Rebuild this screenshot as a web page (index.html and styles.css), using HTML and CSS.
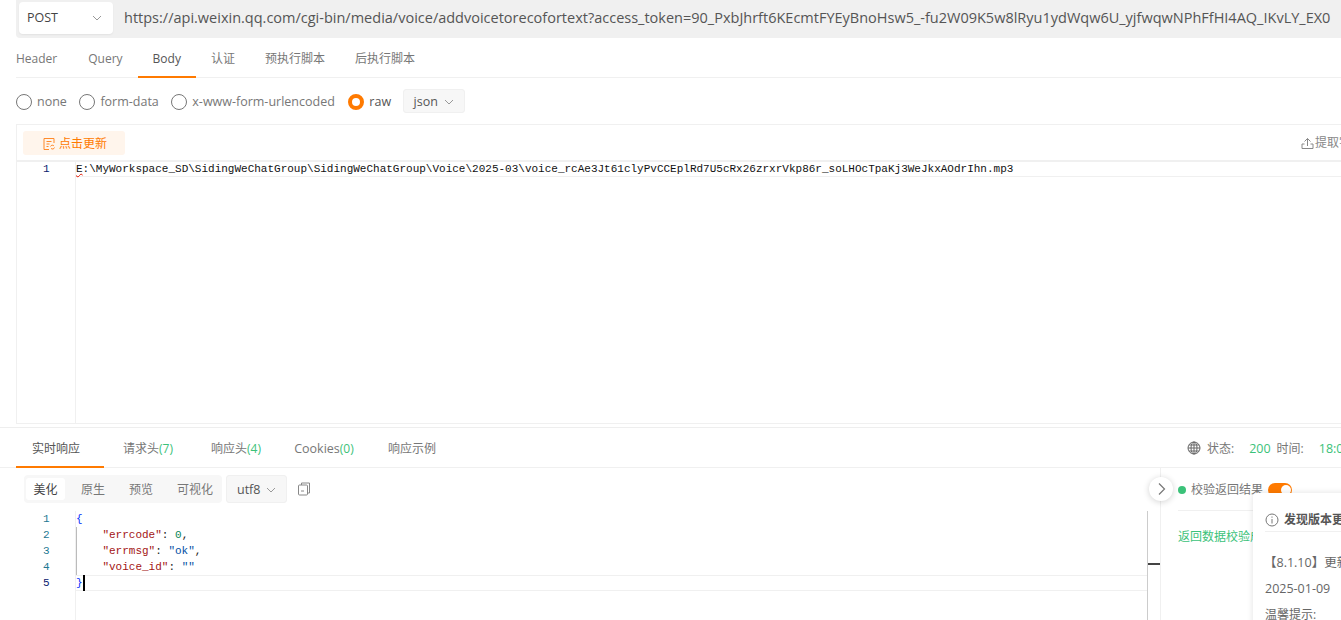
FILE: index.html
```html
<!DOCTYPE html>
<html lang="zh-CN">
<head>
<meta charset="utf-8">
<title>API</title>
<link rel="stylesheet" href="styles.css">
</head>
<body>
<div class="page">
  <section class="request">
    <div class="urlbar">
      <div class="method"><span>POST</span><svg class="chev" width="12" height="12" viewBox="0 0 12 12"><path d="M2 4l4 4 4-4" fill="none" stroke="#999" stroke-width="1"/></svg></div>
      <div class="url">https://api.weixin.qq.com/cgi-bin/media/voice/addvoicetorecofortext?access_token=90_PxbJhrft6KEcmtFYEyBnoHsw5_-fu2W09K5w8lRyu1ydWqw6U_yjfwqwNPhFfHI4AQ_IKvLY_EX0</div>
    </div>
    <nav class="tabs">
      <a class="tab">Header</a><a class="tab">Query</a><a class="tab active">Body</a><a class="tab">认证</a><a class="tab">预执行脚本</a><a class="tab">后执行脚本</a>
    </nav>
    <div class="radios">
      <label class="radio"><i class="dot"></i>none</label>
      <label class="radio"><i class="dot"></i>form-data</label>
      <label class="radio wide"><i class="dot"></i>x-www-form-urlencoded</label>
      <label class="radio on"><i class="dot"></i>raw</label>
      <div class="select json">json<svg width="12" height="12" viewBox="0 0 12 12"><path d="M2 4l4 4 4-4" fill="none" stroke="#999"/></svg></div>
    </div>
    <div class="editor">
      <div class="edit-tools">
        <button class="update"><svg width="14" height="14" viewBox="0 0 14 14" fill="none" stroke="#ff8a2b"><path d="M12 6V1.500H2v11h5M4.500 4.500h5M4.500 7h3M4.500 9.500h2M8.500 9.500a2 2 0 0 1 3.500-.5M12.500 10.500a2 2 0 0 1-3.500.8"/></svg>点击更新</button>
        <div class="extract"><svg width="13" height="13" viewBox="0 0 13 13" fill="none" stroke="#888"><path d="M3.500 7H1v4.500h11V7H9.500M6.500 9V1.500M3.500 4.500l3-3 3 3"/></svg>提取字段</div>
      </div>
      <div class="code body-code">
        <div class="gutter"><div class="num last">1</div></div>
        <div class="lines"><div class="line cur"><span class="squiggle">E</span>:\MyWorkspace_SD\SidingWeChatGroup\SidingWeChatGroup\Voice\2025-03\voice_rcAe3Jt61clyPvCCEplRd7U5cRx26zrxrVkp86r_soLHOcTpaKj3WeJkxAOdrIhn.mp3</div></div>
      </div>
    </div>
  </section>
  <section class="response">
    <div class="res-head">
      <nav class="res-tabs">
        <a class="rtab active">实时响应</a><a class="rtab">请求头<em>(7)</em></a><a class="rtab">响应头<em>(4)</em></a><a class="rtab"><span class="lat">Cookies</span><em>(0)</em></a><a class="rtab">响应示例</a>
      </nav>
      <div class="status">
        <svg width="14" height="14" viewBox="0 0 14 14" fill="none" stroke="#666"><circle cx="7" cy="7" r="6"/><ellipse cx="7" cy="7" rx="3" ry="6"/><path d="M7 1v12M1 7h12M2 4h10M2 10h10"/></svg>
        <span>状态:</span><b>200</b><span>时间:</span><b>18:05</b>
      </div>
    </div>
    <div class="res-body">
      <div class="res-main">
        <div class="res-tools">
          <div class="segment"><span class="sel">美化</span><span>原生</span><span>预览</span><span>可视化</span></div>
          <div class="select utf">utf8<svg width="12" height="12" viewBox="0 0 12 12"><path d="M2 4l4 4 4-4" fill="none" stroke="#999"/></svg></div>
          <svg class="copy" width="14" height="14" viewBox="0 0 14 14" fill="none" stroke="#888"><path d="M4.500 3V1h8v10h-2"/><rect x="1.500" y="3" width="9" height="10" rx="1"/><path d="M4 9h3"/></svg>
        </div>
        <div class="code res-code">
          <div class="gutter">
            <div class="num">1</div><div class="num">2</div><div class="num">3</div><div class="num">4</div><div class="num last">5</div>
          </div>
          <div class="lines">
            <div class="line"><span class="p">{</span></div>
            <div class="line in">    <span class="k">"errcode"</span>: <span class="n">0</span>,</div>
            <div class="line in">    <span class="k">"errmsg"</span>: <span class="k2">"ok"</span>,</div>
            <div class="line in">    <span class="k">"voice_id"</span>: <span class="k2">""</span></div>
            <div class="line caret-line"><span class="p">}</span><i class="caret"></i></div>
          </div>
          <div class="scrollbar"><i></i></div>
        </div>
      </div>
      <aside class="verify">
        <div class="verify-head"><i class="gdot"></i>校验返回结果<span class="switch"></span></div>
        <div class="verify-text">返回数据校验成功</div>
      </aside>
    </div>
    <button class="collapse" aria-label="收起"><svg width="10" height="14" viewBox="0 0 10 14"><path d="M2 1.500l5.500 5.500-5.500 5.500" fill="none" stroke="#777" stroke-width="1.200"/></svg></button>
  </section>
  <div class="notice">
    <div class="notice-title"><svg width="14" height="14" viewBox="0 0 14 14" fill="none" stroke="#777"><circle cx="7" cy="7" r="6"/><path d="M7 6v4.500M7 3.500v1.200"/></svg><b>发现版本更新</b></div>
    <p class="ver">【8.1.10】更新内容</p>
    <p>2025-01-09</p>
    <p class="tip">温馨提示:</p>
  </div>
</div>
</body>
</html>
```
FILE: styles.css
```css
* { box-sizing: border-box; }
html, body { margin: 0; padding: 0; background: #fff; overflow: hidden; }
.page {
  position: relative; width: 1341px; height: 620px; overflow: hidden;
  font: 12px/16px "Open Sans", "Noto Sans CJK SC", sans-serif; color: #666;
}
.lat { font-size: 12.500px; }
.request { padding-left: 16px; }
.urlbar {
  display: flex; align-items: center; height: 38px; width: 1325px;
  background: #f0f0f0; border-radius: 0 0 0 4px; padding: 0 9px 2px 3px;
}
.method {
  flex: none; display: flex; align-items: center; justify-content: space-between;
  width: 94px; height: 32px; padding: 0 10px 0 8px; background: #fff; border-radius: 4px;
  color: #444; font-size: 12.500px; box-shadow: 0 1px 2px rgba(0,0,0,.06);
}
.url { flex: 1; min-width: 0; overflow: hidden; margin-left: 11px; font-size: 14.500px; line-height: 36px; color: #555; white-space: nowrap; }
.tabs { display: flex; height: 40px; border-bottom: 1px solid #f0f0f0; }
.tab { display: block; padding: 0 15px; line-height: 41px; color: #777; height: 40px; }
.tab:first-child { padding: 0 16px 0 0; }
.tab.active { color: #555; border-bottom: 2px solid #ff7a00; }
.radios { display: flex; align-items: center; height: 46px; color: #777; font-size: 12.500px; }
.radio { display: flex; align-items: center; margin: 2px 12.500px 0 0; }
.radio.wide { margin-right: 13.500px; }
.radio.on { margin-right: 11.500px; color: #555; }
.dot { flex: none; width: 16px; height: 16px; margin-right: 5px; border: 1px solid #777; border-radius: 50%; background: #fff; }
.radio.on .dot { border: 4px solid #ff7a00; }
.select { display: flex; align-items: center; padding-top: 1px; background: #f7f7f7; border: 1px solid #f0f0f0; border-radius: 3px; color: #555; font-size: 12.500px; }
.select svg { flex: none; margin-left: 5px; }
.json { width: 62px; height: 24px; padding-left: 10px; }
.editor { height: 300px; border: solid #f0f0f0; border-width: 1px 0 1px 1px; display: flex; flex-direction: column; }
.edit-tools { flex: none; height: 37px; display: flex; align-items: center; justify-content: space-between; padding: 1px 0 0 6px; border-bottom: 2px solid #f0f0f0; }
.update {
  display: flex; align-items: center; gap: 3px; width: 102px; height: 24px; padding: 1px 0 0 19px;
  border: 0; border-radius: 3px; background: #fff5ec; color: #ff7a00; font: inherit;
}
.update svg { flex: none; }
.extract { display: flex; align-items: center; gap: 1px; width: 40px; white-space: nowrap; color: #888; }
.extract svg { flex: none; }
.code { flex: 1; display: flex; position: relative; font: 11px/16px "Liberation Mono", "DejaVu Sans Mono", monospace; color: #111; }
.body-code { margin-top: -1px; }
.gutter { flex: none; width: 59px; border-right: 1px solid #f0f0f0; }
.num { height: 16px; padding-left: 26px; color: #237893; }
.num.last { color: #0b216f; }
.lines { flex: 1; }
.line { height: 16px; white-space: pre; }
.line.cur { box-shadow: inset 0 -1px #f0f0f0; }
.squiggle { text-decoration: underline wavy #e51400 1px; }
.response { margin-top: 3px; border-top: 1px solid #eee; position: relative; }
.res-head { display: flex; justify-content: space-between; height: 40px; border-bottom: 1px solid #f0f0f0; padding-left: 16px; }
.res-tabs { display: flex; }
.rtab { display: block; width: 88px; height: 40px; line-height: 41px; color: #777; white-space: nowrap; text-align: center; }
.rtab em { font-style: normal; color: #3bc279; }
.rtab.active { padding-right: 8px; color: #555; border-bottom: 2px solid #ff7a00; }
.status { flex: none; display: flex; align-items: center; width: 154px; padding-top: 2px; gap: 6px; color: #777; white-space: nowrap; font-size: 12.500px; }
.status svg { flex: none; margin-top: -2px; }
.status span { font-size: 12px; }
.status b { font-weight: 400; color: #3bc279; margin-left: 9px; }
.res-body { display: flex; height: 152px; }
.res-main { width: 1161px; flex: none; display: flex; flex-direction: column; border-right: 1px solid #f0f0f0; }
.res-tools { flex: none; height: 43px; display: flex; align-items: center; padding: 0 0 1px 24px; gap: 4px; }
.segment { flex: none; display: flex; align-items: center; gap: 8px; height: 28px; width: 198px; padding: 0 0 0 2px; background: #f7f7f7; border-radius: 4px; white-space: nowrap; }
.segment span { flex: none; height: 22px; padding: 1px 8px 0; line-height: 21px; color: #777; }
.segment .sel { width: 39px; padding: 1px 0 0; text-align: center; background: #fff; color: #444; border-radius: 3px; }
.utf { width: 61px; height: 28px; padding-left: 10px; }
.copy { flex: none; margin-left: 6px; }
.res-code { padding-left: 17px; color: #222; }
.res-code .gutter { height: 109px; }
.res-code .lines { padding-right: 13px; }
.res-code .line.in { box-shadow: inset 1px 0 #bbb; }
.k { color: #a31515; }
.k2 { color: #0451a5; }
.n { color: #098658; }
.p { color: #0431fa; }
.caret-line { box-shadow: inset 0 1px #f0f0f0, inset 0 -1px #f0f0f0; }
.caret { display: inline-block; width: 2px; height: 16px; background: #000; vertical-align: top; }
.scrollbar { position: absolute; right: 0; top: 0; width: 13px; height: 109px; border-left: 1px solid #ccc; }
.scrollbar i { position: absolute; left: 0; top: 52px; width: 12px; height: 2px; background: #444; }
.verify { width: 180px; flex: none; padding: 0 0 0 17px; }
.verify-head { display: flex; align-items: center; height: 43px; padding-top: 2px; border-bottom: 1px solid #f0f0f0; color: #777; white-space: nowrap; }
.gdot { flex: none; width: 8px; height: 8px; margin-right: 5px; border-radius: 50%; background: #3bc279; }
.switch { flex: none; position: relative; width: 24px; height: 14px; margin: -1px 0 0 5px; border-radius: 7px; background: #ff7a00; }
.switch::after { content: ""; position: absolute; right: 1px; top: 2px; width: 10px; height: 10px; border-radius: 50%; background: #fff; }
.verify-text { margin-top: 18px; color: #3bc279; white-space: nowrap; }
.collapse { position: absolute; left: 1149px; top: 49px; width: 24px; height: 24px; padding: 0 0 0 2px; display: flex; align-items: center; justify-content: center; border: 0; border-radius: 50%; background: #fff; box-shadow: 0 1px 6px rgba(0,0,0,.18); }
.notice { position: absolute; left: 1253px; top: 493px; width: 340px; height: 200px; padding: 0 0 0 12px; background: #fff; box-shadow: 0 0 6px rgba(0,0,0,.12); border-radius: 4px; color: #666; font-size: 12.500px; }
.notice-title { display: flex; align-items: center; gap: 5px; height: 39px; padding-top: 15px; border-bottom: 1px solid #f0f0f0; font-size: 12px; }
.notice-title svg { flex: none; }
.notice-title b { font-weight: 700; color: #555; }
.notice p { margin: 0 0 10px; white-space: nowrap; line-height: 16px; }
.notice .ver { margin-top: 22px; margin-left: -1px; padding-top: 1px; height: 17px; }
.notice .tip { margin-top: 10px; font-size: 12px; }
```
